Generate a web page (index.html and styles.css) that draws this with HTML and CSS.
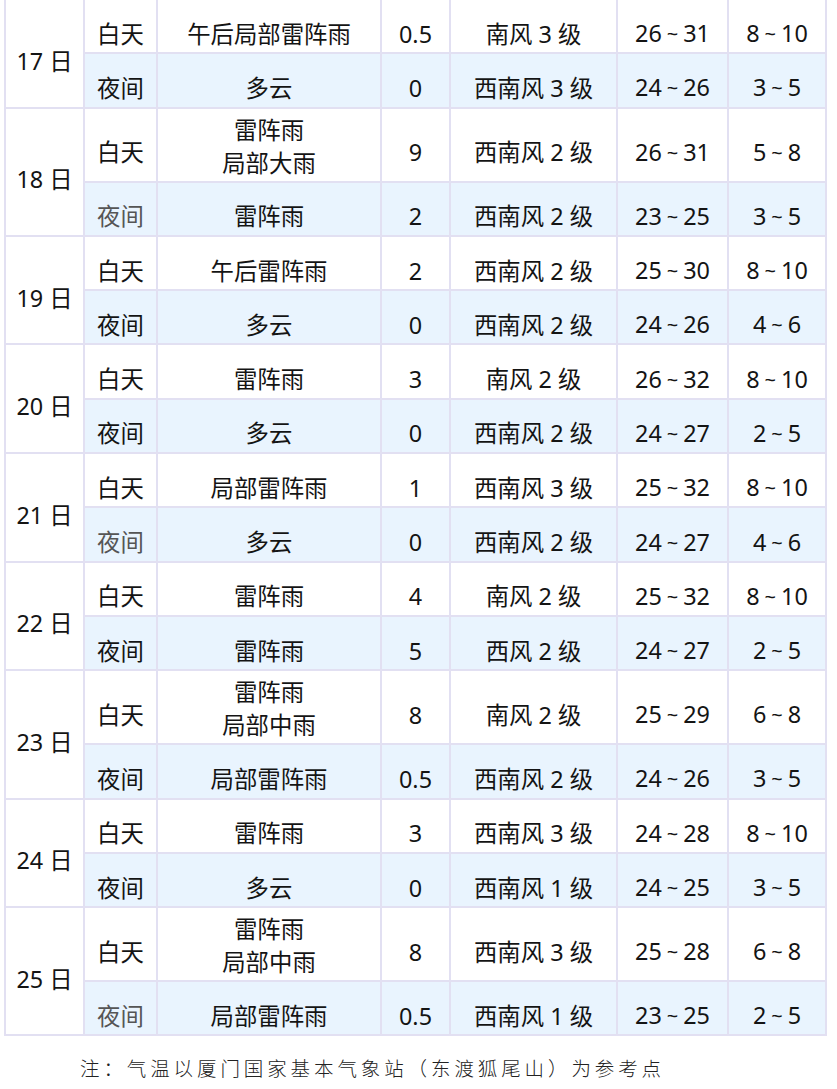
FILE: index.html
```html
<!DOCTYPE html>
<html lang="zh-CN">
<head>
<meta charset="utf-8">
<title>厦门天气预报</title>
<link rel="stylesheet" href="styles.css">
</head>
<body>
<div class="wrap">
<table class="fc">
<colgroup>
<col class="c-date"><col class="c-type"><col class="c-wx"><col class="c-rain"><col class="c-wind"><col class="c-temp"><col class="c-uv">
</colgroup>
<tbody>
<tr class="day"><td class="date" rowspan="2">17 日</td><td>白天</td><td>午后局部雷阵雨</td><td>0.5</td><td>南风 3 级</td><td>26<span class="t">~</span>31</td><td>8<span class="t">~</span>10</td></tr>
<tr class="night"><td>夜间</td><td>多云</td><td>0</td><td>西南风 3 级</td><td>24<span class="t">~</span>26</td><td>3<span class="t">~</span>5</td></tr>

<tr class="day dbl"><td class="date" rowspan="2">18 日</td><td>白天</td><td class="two">雷阵雨<br>局部大雨</td><td>9</td><td>西南风 2 级</td><td>26<span class="t">~</span>31</td><td>5<span class="t">~</span>8</td></tr>
<tr class="night"><td class="muted">夜间</td><td>雷阵雨</td><td>2</td><td>西南风 2 级</td><td>23<span class="t">~</span>25</td><td>3<span class="t">~</span>5</td></tr>

<tr class="day"><td class="date" rowspan="2">19 日</td><td>白天</td><td>午后雷阵雨</td><td>2</td><td>西南风 2 级</td><td>25<span class="t">~</span>30</td><td>8<span class="t">~</span>10</td></tr>
<tr class="night"><td>夜间</td><td>多云</td><td>0</td><td>西南风 2 级</td><td>24<span class="t">~</span>26</td><td>4<span class="t">~</span>6</td></tr>

<tr class="day"><td class="date" rowspan="2">20 日</td><td>白天</td><td>雷阵雨</td><td>3</td><td>南风 2 级</td><td>26<span class="t">~</span>32</td><td>8<span class="t">~</span>10</td></tr>
<tr class="night"><td>夜间</td><td>多云</td><td>0</td><td>西南风 2 级</td><td>24<span class="t">~</span>27</td><td>2<span class="t">~</span>5</td></tr>

<tr class="day"><td class="date" rowspan="2">21 日</td><td>白天</td><td>局部雷阵雨</td><td>1</td><td>西南风 3 级</td><td>25<span class="t">~</span>32</td><td>8<span class="t">~</span>10</td></tr>
<tr class="night"><td class="muted">夜间</td><td>多云</td><td>0</td><td>西南风 2 级</td><td>24<span class="t">~</span>27</td><td>4<span class="t">~</span>6</td></tr>

<tr class="day"><td class="date" rowspan="2">22 日</td><td>白天</td><td>雷阵雨</td><td>4</td><td>南风 2 级</td><td>25<span class="t">~</span>32</td><td>8<span class="t">~</span>10</td></tr>
<tr class="night"><td>夜间</td><td>雷阵雨</td><td>5</td><td>西风 2 级</td><td>24<span class="t">~</span>27</td><td>2<span class="t">~</span>5</td></tr>

<tr class="day dbl"><td class="date" rowspan="2">23 日</td><td>白天</td><td class="two">雷阵雨<br>局部中雨</td><td>8</td><td>南风 2 级</td><td>25<span class="t">~</span>29</td><td>6<span class="t">~</span>8</td></tr>
<tr class="night"><td>夜间</td><td>局部雷阵雨</td><td>0.5</td><td>西南风 2 级</td><td>24<span class="t">~</span>26</td><td>3<span class="t">~</span>5</td></tr>

<tr class="day"><td class="date" rowspan="2">24 日</td><td>白天</td><td>雷阵雨</td><td>3</td><td>西南风 3 级</td><td>24<span class="t">~</span>28</td><td>8<span class="t">~</span>10</td></tr>
<tr class="night"><td>夜间</td><td>多云</td><td>0</td><td>西南风 1 级</td><td>24<span class="t">~</span>25</td><td>3<span class="t">~</span>5</td></tr>

<tr class="day dbl"><td class="date" rowspan="2">25 日</td><td>白天</td><td class="two">雷阵雨<br>局部中雨</td><td>8</td><td>西南风 3 级</td><td>25<span class="t">~</span>28</td><td>6<span class="t">~</span>8</td></tr>
<tr class="night"><td class="muted">夜间</td><td>局部雷阵雨</td><td>0.5</td><td>西南风 1 级</td><td>23<span class="t">~</span>25</td><td>2<span class="t">~</span>5</td></tr>
</tbody>
</table>
<p class="note">注：气温以厦门国家基本气象站（东渡狐尾山）为参考点</p>
</div>
</body>
</html>
```
FILE: styles.css
```css
html, body {
  margin: 0;
  padding: 0;
  background: #ffffff;
}

.wrap {
  padding-left: 4px;
  width: 821px;
}

.fc {
  border-collapse: collapse;
  table-layout: fixed;
  width: 821px;
  margin-top: -2px;
  font-family: "Noto Sans", "Noto Sans CJK SC", sans-serif;
  font-size: 23.4px;
  color: #141414;
}

.c-date { width: 79px; }
.c-type { width: 73px; }
.c-wx { width: 224px; }
.c-rain { width: 69px; }
.c-wind { width: 167px; }
.c-temp { width: 111px; }
.c-uv { width: 98px; }

.fc td {
  border: 2px solid #e2e0f2;
  text-align: center;
  vertical-align: middle;
  line-height: 33px;
  padding: 16px 0 0 0;
  white-space: nowrap;
}

.fc .t {
  display: inline-block;
  margin: 0 5px;
  font-size: 20px;
  position: relative;
  top: -1px;
}

.fc tr {
  height: 54.3px;
}

.fc tr.dbl {
  height: 72.3px;
}

.fc td.two {
  padding: 5px 0 1px 0;
}

.fc tr.night td {
  background: #e9f4fe;
}

.fc td.date {
  background: #ffffff;
}

.fc td.muted {
  color: #555555;
}

.note {
  margin: 18px 0 0 76px;
  font-family: "Noto Sans CJK SC", sans-serif;
  font-weight: 300;
  font-size: 19.5px;
  letter-spacing: 3.9px;
  line-height: 28px;
  color: #222222;
}
```
